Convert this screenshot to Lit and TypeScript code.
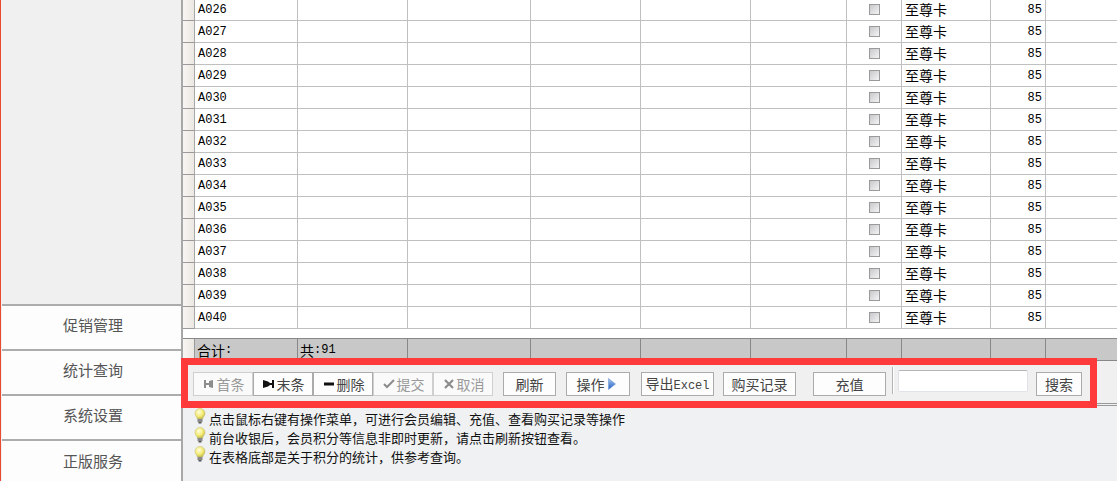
import { LitElement, html, css, svg } from "lit";
import { customElement } from "lit/decorators.js";

const ROWS = Array.from({ length: 15 }, (_, i) => `A0${26 + i}`);
const EMPTY_COLS = 4;

const ICONS: Record<string, unknown> = {
  first: svg`<svg class="ic" width="12" height="10" viewBox="0 0 12 10"><path d="M1 1h2v8H1zM3 4h3V2h0L10 1v8L6 8V6H3z" fill="currentColor"/></svg>`,
  last: svg`<svg class="ic" width="12" height="10" viewBox="0 0 12 10"><path d="M0 1l5 1.500L7 4h2V1h2v8H9V6H7L5 7.500 0 9z" fill="currentColor"/></svg>`,
  minus: svg`<svg class="ic" width="12" height="10" viewBox="0 0 12 10"><rect x="1" y="3.500" width="10" height="3" fill="currentColor"/></svg>`,
  check: svg`<svg class="ic" width="12" height="10" viewBox="0 0 12 10"><path d="M1 5l3 3 7-7" fill="none" stroke="currentColor" stroke-width="2"/></svg>`,
  cross: svg`<svg class="ic" width="12" height="10" viewBox="0 0 12 10"><path d="M2 1l8 8M10 1l-8 8" fill="none" stroke="currentColor" stroke-width="2.200"/></svg>`,
};

const BULB = svg`<svg class="bulb" width="12" height="16" viewBox="0 0 12 16">
  <defs><radialGradient id="bg" cx="40%" cy="35%" r="70%"><stop offset="0" stop-color="#fffde0"/><stop offset=".6" stop-color="#f2ea70"/><stop offset="1" stop-color="#b8b040"/></radialGradient></defs>
  <path d="M6 .5a5 5 0 0 1 5 5c0 2-1.500 3-2.200 4.500V11H3.200V10C2.500 8.500 1 7.500 1 5.500a5 5 0 0 1 5-5z" fill="url(#bg)" stroke="#c8c27a" stroke-width=".6"/>
  <rect x="3.500" y="11" width="5" height="3" fill="#8a8a8a"/><rect x="4.500" y="14" width="3" height="1.500" fill="#555"/>
</svg>`;

const ARROW = svg`<svg class="arrow" width="8" height="12" viewBox="0 0 8 12">
  <defs><linearGradient id="ag" x1="0" y1="0" x2="0" y2="1"><stop offset="0" stop-color="#a8c8f0"/><stop offset="1" stop-color="#1f5cc0"/></linearGradient></defs>
  <path d="M.5 .5L7.500 6 .5 11.500z" fill="url(#ag)" stroke="#6f9ad8" stroke-width=".6"/>
</svg>`;

@customElement("app-root")
export class AppRoot extends LitElement {
  static styles = css`
    :host {
      display: block;
      position: relative;
      width: 1117px;
      height: 481px;
      overflow: hidden;
      font-family: "Noto Sans CJK SC", sans-serif;
      font-size: 14px;
      color: #000;
      background: #f0f1f3;
    }
    .root { display: grid; grid-template-columns: 183px 1fr; height: 100%; }
    .side {
      display: flex;
      flex-direction: column;
      justify-content: flex-end;
      background: #f0f0f0;
      border-left: 1px solid #ea4a30;
      border-right: 2px solid #a8a8a8;
    }
    .side-item {
      box-sizing: border-box;
      height: 45px;
      border-top: 2px solid #acacac;
      background: #fdfdfd;
      margin-left: 1px;
      display: flex;
      align-items: center;
      justify-content: center;
      padding: 0 0 5px 3px;
      font-size: 15px;
      line-height: 20px;
      color: #555;
    }
    .side-item:last-child { height: 42px; padding-bottom: 0; }
    .main { display: flex; flex-direction: column; min-width: 0; overflow: hidden; }
    .table { background: #fff; height: 339px; flex: none; margin-top: -1px; }
    .row, .sum {
      display: grid;
      grid-template-columns: 12px 103px 110px 123px 110px 110px 96px 55px 89px 55px 71px;
      grid-template-rows: 1fr;
      height: 22px;
      box-sizing: border-box;
    }
    .cell {
      box-sizing: border-box;
      display: flex;
      align-items: center;
      padding: 0 3px;
      min-height: 0;
      border-right: 1px solid #c0c0c0;
      border-bottom: 1px solid #c0c0c0;
      line-height: 20px;
      white-space: nowrap;
    }
    .cjk { line-height: 18px; padding-bottom: 2px; }
    .gut {
      background: linear-gradient(90deg, #f8f6f3, #ebe7e2);
      border-right: 1px solid #a8a8a8;
      border-bottom: 1px solid #9a9a9a;
    }
    .mono { font-family: "Liberation Mono", monospace; font-size: 12px; }
    .num { justify-content: flex-end; padding-right: 3px; }
    .ctr { justify-content: center; padding: 0; }
    .box {
      box-sizing: border-box;
      width: 11px;
      height: 11px;
      border: 1px solid #9a9a9a;
      background: linear-gradient(135deg, #c8c8cc, #f4f4f6);
    }
    .last { border-right: 0; }
    .spacer { height: 10px; background: #fff; }
    .sum { background: #c8c8c8; border-top: 1px solid #888; }
    .sum .cell { border-right: 1px solid #888; border-bottom: 0; padding-left: 2px; }
    .sum .gut { background: linear-gradient(90deg, #f8f6f3, #ebe7e2); border-right-color: #999; }
    .sum .last { border-right: 0; }
    .bar {
      flex: none;
      box-sizing: border-box;
      height: 46px;
      margin-left: -1px;
      padding: 11px 0 0 11px;
      display: flex;
      align-items: flex-start;
      background: #f0f0f0;
      border-top: 1px solid #888;
      border-bottom: 3px double #999;
    }
    .btn {
      box-sizing: border-box;
      flex: none;
      height: 24px;
      display: flex;
      align-items: center;
      justify-content: center;
      gap: 1px;
      background: #fdfdfd;
      border: 1px solid #ababab;
      color: #444;
      line-height: 20px;
      white-space: nowrap;
    }
    .grp { width: 60px; gap: 2px; padding-left: 1px; }
    .off { color: #999; border-color: #cfcfcf; background: #fafafa; }
    .ic { flex: none; }
    .on .ic { color: #111; }
    .off .ic { color: #8c8c8c; }
    .b1 { margin-left: 10px; width: 53px; }
    .b2 { margin-left: 10px; width: 64px; gap: 3px; padding-right: 4px; }
    .b3 { margin-left: 11px; width: 73px; }
    .b4 { margin-left: 9px; width: 73px; }
    .b5 { margin-left: 17px; width: 73px; }
    .b6 { margin-left: 8px; width: 46px; }
    .sep { flex: none; width: 1px; height: 27px; margin: -5px 0 0 6px; background: #b4b4b4; border-right: 1px solid #fff; }
    .input {
      flex: none;
      box-sizing: border-box;
      width: 130px;
      height: 22px;
      margin: -2px 0 0 4px;
      background: #fff;
      border: 1px solid #dfe2e8;
      border-top-color: #b4b4b4;
      border-radius: 2px;
    }
    .hints { padding: 3px 0 0 11px; font-size: 13px; line-height: 19px; color: #111; }
    .hint { display: flex; align-items: flex-start; height: 19px; gap: 3px; white-space: nowrap; }
    .bulb { flex: none; margin-top: -1px; }
    .red {
      position: absolute;
      left: 181px;
      top: 358px;
      width: 916px;
      height: 50px;
      box-sizing: border-box;
      border: 7px solid #ff3a3a;
      pointer-events: none;
    }
  `;

  private btn(label: string, icon: string, on: boolean) {
    return html`<div class="btn grp ${on ? "on" : "off"}">${ICONS[icon]}<span>${label}</span></div>`;
  }

  render() {
    return html`
      <div class="root">
        <div class="side">
          ${["促销管理", "统计查询", "系统设置", "正版服务"].map((t) => html`<div class="side-item">${t}</div>`)}
        </div>
        <div class="main">
          <div class="table">
            ${ROWS.map(
              (id) => html`<div class="row">
                <div class="cell gut"></div>
                <div class="cell mono">${id}</div>
                ${Array.from({ length: EMPTY_COLS + 1 }, () => html`<div class="cell"></div>`)}
                <div class="cell ctr"><div class="box"></div></div>
                <div class="cell cjk">至尊卡</div>
                <div class="cell num mono">85</div>
                <div class="cell last"></div>
              </div>`
            )}
            <div class="spacer"></div>
          </div>
          <div class="sum">
            <div class="cell gut"></div>
            <div class="cell">合计<span class="mono">:</span></div>
            <div class="cell">共<span class="mono">:91</span></div>
            ${Array.from({ length: 7 }, () => html`<div class="cell"></div>`)}
            <div class="cell last"></div>
          </div>
          <div class="bar">
            ${this.btn("首条", "first", false)}
            ${this.btn("末条", "last", true)}
            ${this.btn("删除", "minus", true)}
            ${this.btn("提交", "check", false)}
            ${this.btn("取消", "cross", false)}
            <div class="btn b1">刷新</div>
            <div class="btn b2"><span>操作</span>${ARROW}</div>
            <div class="btn b3"><span>导出<span class="mono">Excel</span></span></div>
            <div class="btn b4">购买记录</div>
            <div class="btn b5">充值</div>
            <div class="sep"></div>
            <div class="input"></div>
            <div class="btn b6">搜索</div>
          </div>
          <div class="hints">
            <div class="hint">${BULB}<span>点击鼠标右键有操作菜单，可进行会员编辑、充值、查看购买记录等操作</span></div>
            <div class="hint">${BULB}<span>前台收银后，会员积分等信息非即时更新，请点击刷新按钮查看。</span></div>
            <div class="hint">${BULB}<span>在表格底部是关于积分的统计，供参考查询。</span></div>
          </div>
        </div>
      </div>
      <div class="red"></div>
    `;
  }
}
